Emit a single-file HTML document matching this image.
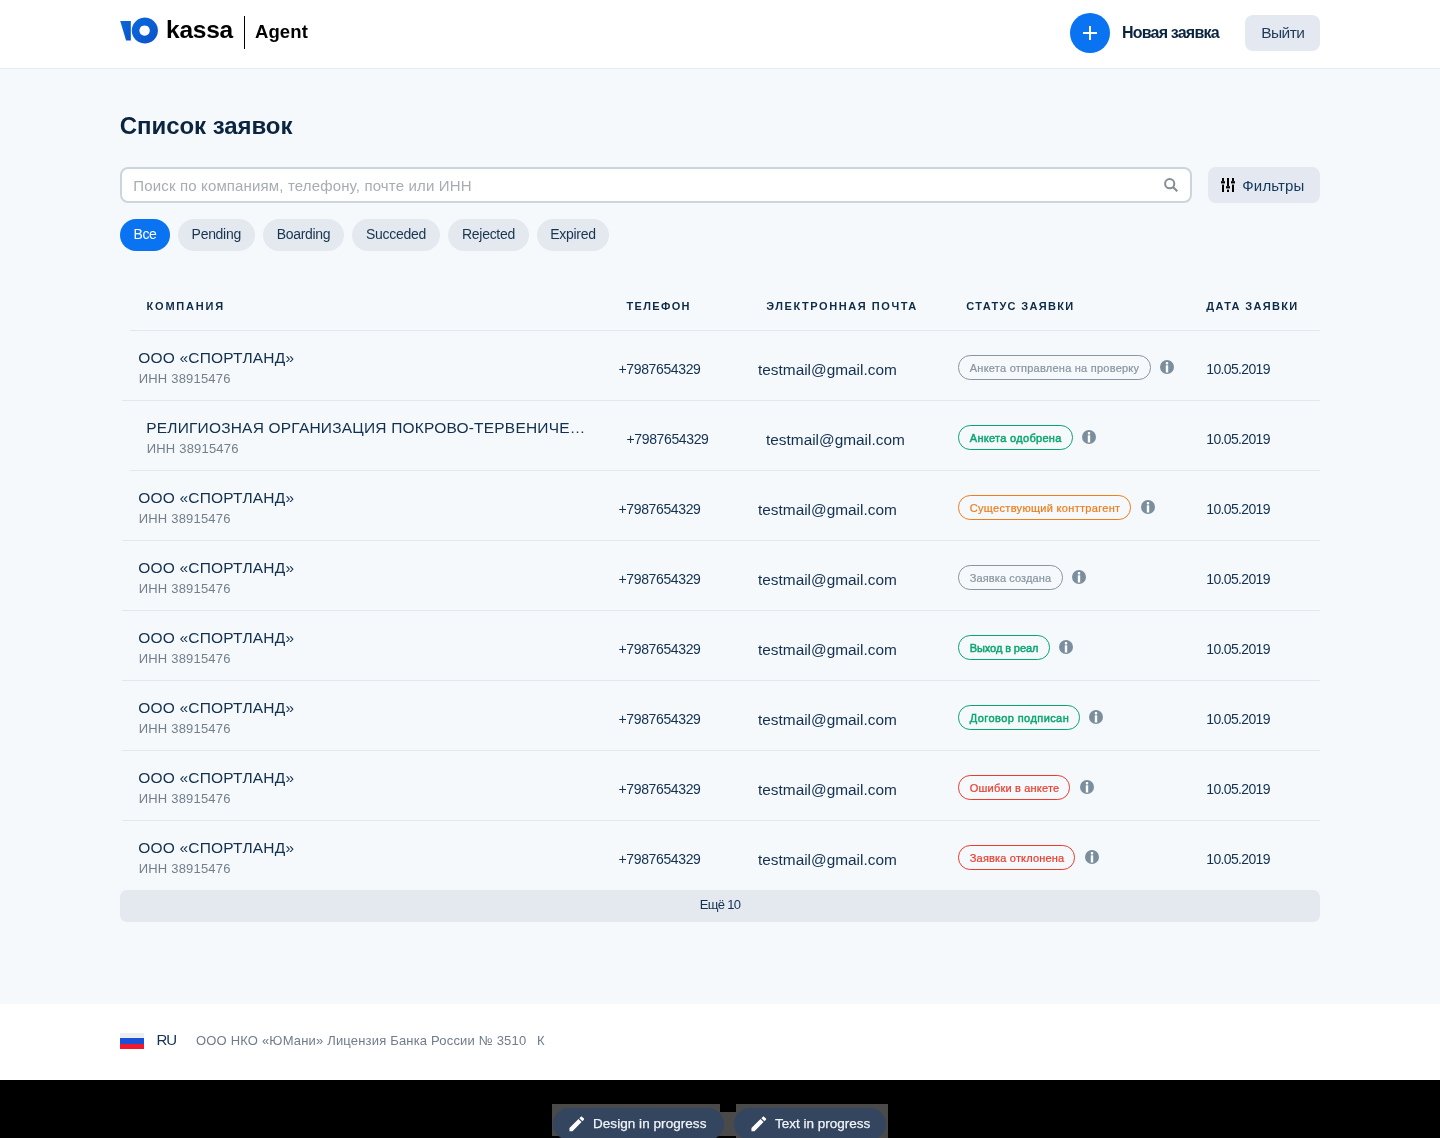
<!DOCTYPE html><html lang="ru"><head><meta charset="utf-8"><title>Список заявок</title><style>
*{box-sizing:border-box;margin:0;padding:0}
html,body{width:1440px;height:1138px;overflow:hidden}
body{font-family:"Liberation Sans",sans-serif;background:#f5f9fc;position:relative;color:#12304f}
#wrap{position:absolute;left:0;top:0;width:1440px;height:1138px;will-change:transform;overflow:hidden}
.abs{position:absolute;white-space:nowrap}
.t{position:absolute;white-space:nowrap;line-height:1}
#hdr{position:absolute;left:0;top:0;width:1440px;height:68px;background:#fff;border-bottom:1px solid #e6ebf1;height:69px}
#ftr{position:absolute;left:0;top:1004px;width:1440px;height:76px;background:#fff}
#blk{position:absolute;left:0;top:1080px;width:1440px;height:58px;background:#000}
.chip{position:absolute;top:219px;height:32px;border-radius:16px;background:#e4e9f0;color:#173450;font-size:14px;letter-spacing:-.3px;line-height:31px;text-align:center}
.chip.on{background:#0a73f2;color:#fff}
.th{position:absolute;top:301px;font-size:11px;font-weight:700;line-height:11px;color:#0e2b47;white-space:nowrap}
.row{position:absolute;left:0;width:1440px;height:70px}
.row .line{position:absolute;bottom:-1px;height:1px;background:#e3e8ee;right:120px}
.name{position:absolute;top:19.7px;font-size:15.5px;letter-spacing:.2px;line-height:16px;color:#12304f;white-space:nowrap}
.inn{position:absolute;top:41.6px;font-size:13px;letter-spacing:.2px;line-height:13px;color:#737f8b;white-space:nowrap}
.ph{position:absolute;top:31.8px;font-size:14px;letter-spacing:-.37px;line-height:14px;white-space:nowrap}
.em{position:absolute;top:32.3px;font-size:15.4px;line-height:16px;white-space:nowrap}
.dt{position:absolute;left:1206.3px;top:31.9px;font-size:14px;letter-spacing:-.66px;line-height:14px;white-space:nowrap}
.pill{position:absolute;left:958px;top:25.2px;height:24.4px;border-radius:12.2px;border:1.6px solid;font-size:11px;line-height:24.6px;padding-left:10.8px;white-space:nowrap;-webkit-text-stroke:.22px}
.gray{color:#8995a1;border-color:#8995a1}
.green{color:#0aa56d;border-color:#0aa56d;-webkit-text-stroke:.45px #0aa56d}
.orange{color:#f07c1a;border-color:#f07c1a}
.red{color:#ec3b2d;border-color:#ec3b2d}
.info{position:absolute;top:30.3px;width:14px;height:14px}
</style></head><body><div id="wrap">
<div id="hdr"></div>
<svg class="abs" style="left:120px;top:17px" width="39" height="27" viewBox="0 0 39 27">
<defs><linearGradient id="lg" x1="0" y1="0" x2="1" y2="1"><stop offset="0" stop-color="#0a6ade"/><stop offset="1" stop-color="#0a52c8"/></linearGradient></defs>
<path d="M0.2 4.1 L10.8 4.1 L10.8 23.6 L6.1 23.6 Z" fill="url(#lg)"/>
<path fill-rule="evenodd" d="M24.85 0.4 a13.1 13.1 0 1 0 0.001 0 Z M24.6 8.4 a5.2 5.2 0 1 1 -0.001 0 Z" fill="url(#lg)"/>
</svg>
<div class="t" style="left:166.1px;top:18.4px;font-size:24.5px;font-weight:700;color:#000;letter-spacing:-.25px">kassa</div>
<div class="abs" style="left:244px;top:16px;width:1px;height:33px;background:#000"></div>
<div class="t" style="left:255px;top:22.6px;font-size:18.5px;font-weight:700;color:#000;letter-spacing:.1px">Agent</div>
<div class="abs" style="left:1070px;top:13px;width:40px;height:40px;border-radius:20px;background:#0a73f2"></div>
<div class="abs" style="left:1083px;top:32px;width:14px;height:2px;background:#fff"></div><div class="abs" style="left:1089px;top:26px;width:2px;height:14px;background:#fff"></div>
<div class="t" style="left:1122px;top:24.9px;font-size:16px;font-weight:700;letter-spacing:-.8px;color:#0b2540">Новая заявка</div>
<div class="abs" style="left:1245px;top:15px;width:75px;height:36px;border-radius:8px;background:#e4e9f1;text-align:center;font-size:15.5px;letter-spacing:-.6px;line-height:36px;color:#1f3a57;padding-left:.6px">Выйти</div>
<div class="t" style="left:119.8px;top:113.7px;font-size:24px;font-weight:700;color:#0b2540;letter-spacing:-.06px">Список заявок</div>
<div class="abs" style="left:120px;top:167px;width:1072px;height:36px;border:2px solid #cdd4db;border-radius:8px;background:#fff"></div>
<div class="t" style="left:133.3px;top:177.9px;font-size:15px;letter-spacing:.15px;color:#a8adb3">Поиск по компаниям, телефону, почте или ИНН</div>
<svg class="abs" style="left:1162px;top:176px" width="18" height="18" viewBox="0 0 18 18"><circle cx="7.7" cy="7.7" r="4.6" fill="none" stroke="#858d96" stroke-width="2"/><path d="M11.2 11.2 L15.3 15.3" stroke="#858d96" stroke-width="2.2"/></svg>
<div class="abs" style="left:1208px;top:167px;width:112px;height:36px;border-radius:8px;background:#e4e9f1"></div>
<svg class="abs" style="left:1220px;top:177px" width="16" height="16" viewBox="0 0 16 16" fill="#000">
<rect x="2" y="1" width="2" height="3.2"/><rect x="1" y="4.2" width="4" height="2.2"/><rect x="2" y="7.6" width="2" height="7.4"/>
<rect x="7" y="1" width="2" height="8.2"/><rect x="6" y="9.2" width="4" height="2.2"/><rect x="7" y="12.6" width="2" height="2.4"/>
<rect x="12" y="1" width="2" height="3.2"/><rect x="11" y="4.2" width="4" height="2.2"/><rect x="12" y="7.6" width="2" height="7.4"/>
</svg>
<div class="t" style="left:1242.3px;top:177.6px;font-size:15px;letter-spacing:.15px;color:#12385c">Фильтры</div>
<div class="chip on" style="left:120px;width:50px">Все</div>
<div class="chip" style="left:178px;width:76.5px">Pending</div>
<div class="chip" style="left:263px;width:81px">Boarding</div>
<div class="chip" style="left:352px;width:88px">Succeded</div>
<div class="chip" style="left:448px;width:81px">Rejected</div>
<div class="chip" style="left:537px;width:72px">Expired</div>
<div class="th" style="left:146.5px;letter-spacing:1.81px">КОМПАНИЯ</div>
<div class="th" style="left:626.5px;letter-spacing:1.33px">ТЕЛЕФОН</div>
<div class="th" style="left:766.3px;letter-spacing:1.57px">ЭЛЕКТРОННАЯ ПОЧТА</div>
<div class="th" style="left:966.3px;letter-spacing:1.33px">СТАТУС ЗАЯВКИ</div>
<div class="th" style="left:1206.3px;letter-spacing:1.34px">ДАТА ЗАЯВКИ</div>
<div class="abs" style="left:130px;top:330px;width:1190px;height:1px;background:#e3e8ee"></div>
<div class="row" style="top:330px">
<div class="line" style="left:122px"></div>
<div class="name" style="left:138.2px">ООО «СПОРТЛАНД»</div>
<div class="inn" style="left:138.7px">ИНН 38915476</div>
<div class="ph" style="left:618.5px">+7987654329</div>
<div class="em" style="left:758px">testmail@gmail.com</div>
<div class="pill gray" style="width:193px;letter-spacing:0.24px">Анкета отправлена на проверку</div>
<svg class="info" style="left:1160.2px" viewBox="0 0 14 14"><circle cx="7" cy="7" r="7" fill="#7b8e9e"/><rect x="5.8" y="5.3" width="2.4" height="7.2" fill="#fff"/><rect x="5.8" y="2" width="2.4" height="2.5" rx=".7" fill="#fff"/></svg>
<div class="dt">10.05.2019</div>
</div>
<div class="row" style="top:400px">
<div class="line" style="left:130px"></div>
<div class="name" style="left:146.2px">РЕЛИГИОЗНАЯ ОРГАНИЗАЦИЯ ПОКРОВО-ТЕРВЕНИЧЕ…</div>
<div class="inn" style="left:146.7px">ИНН 38915476</div>
<div class="ph" style="left:626.5px">+7987654329</div>
<div class="em" style="left:766px">testmail@gmail.com</div>
<div class="pill green" style="width:114.7px;letter-spacing:0.3px">Анкета одобрена</div>
<svg class="info" style="left:1081.9px" viewBox="0 0 14 14"><circle cx="7" cy="7" r="7" fill="#7b8e9e"/><rect x="5.8" y="5.3" width="2.4" height="7.2" fill="#fff"/><rect x="5.8" y="2" width="2.4" height="2.5" rx=".7" fill="#fff"/></svg>
<div class="dt">10.05.2019</div>
</div>
<div class="row" style="top:470px">
<div class="line" style="left:122px"></div>
<div class="name" style="left:138.2px">ООО «СПОРТЛАНД»</div>
<div class="inn" style="left:138.7px">ИНН 38915476</div>
<div class="ph" style="left:618.5px">+7987654329</div>
<div class="em" style="left:758px">testmail@gmail.com</div>
<div class="pill orange" style="width:173.3px;letter-spacing:0.31px">Существующий конттрагент</div>
<svg class="info" style="left:1140.5px" viewBox="0 0 14 14"><circle cx="7" cy="7" r="7" fill="#7b8e9e"/><rect x="5.8" y="5.3" width="2.4" height="7.2" fill="#fff"/><rect x="5.8" y="2" width="2.4" height="2.5" rx=".7" fill="#fff"/></svg>
<div class="dt">10.05.2019</div>
</div>
<div class="row" style="top:540px">
<div class="line" style="left:122px"></div>
<div class="name" style="left:138.2px">ООО «СПОРТЛАНД»</div>
<div class="inn" style="left:138.7px">ИНН 38915476</div>
<div class="ph" style="left:618.5px">+7987654329</div>
<div class="em" style="left:758px">testmail@gmail.com</div>
<div class="pill gray" style="width:104.7px;letter-spacing:0.1px">Заявка создана</div>
<svg class="info" style="left:1071.9px" viewBox="0 0 14 14"><circle cx="7" cy="7" r="7" fill="#7b8e9e"/><rect x="5.8" y="5.3" width="2.4" height="7.2" fill="#fff"/><rect x="5.8" y="2" width="2.4" height="2.5" rx=".7" fill="#fff"/></svg>
<div class="dt">10.05.2019</div>
</div>
<div class="row" style="top:610px">
<div class="line" style="left:122px"></div>
<div class="name" style="left:138.2px">ООО «СПОРТЛАНД»</div>
<div class="inn" style="left:138.7px">ИНН 38915476</div>
<div class="ph" style="left:618.5px">+7987654329</div>
<div class="em" style="left:758px">testmail@gmail.com</div>
<div class="pill green" style="width:91.7px;letter-spacing:-0.1px">Выход в реал</div>
<svg class="info" style="left:1058.9px" viewBox="0 0 14 14"><circle cx="7" cy="7" r="7" fill="#7b8e9e"/><rect x="5.8" y="5.3" width="2.4" height="7.2" fill="#fff"/><rect x="5.8" y="2" width="2.4" height="2.5" rx=".7" fill="#fff"/></svg>
<div class="dt">10.05.2019</div>
</div>
<div class="row" style="top:680px">
<div class="line" style="left:122px"></div>
<div class="name" style="left:138.2px">ООО «СПОРТЛАНД»</div>
<div class="inn" style="left:138.7px">ИНН 38915476</div>
<div class="ph" style="left:618.5px">+7987654329</div>
<div class="em" style="left:758px">testmail@gmail.com</div>
<div class="pill green" style="width:121.9px;letter-spacing:0.42px">Договор подписан</div>
<svg class="info" style="left:1089.1px" viewBox="0 0 14 14"><circle cx="7" cy="7" r="7" fill="#7b8e9e"/><rect x="5.8" y="5.3" width="2.4" height="7.2" fill="#fff"/><rect x="5.8" y="2" width="2.4" height="2.5" rx=".7" fill="#fff"/></svg>
<div class="dt">10.05.2019</div>
</div>
<div class="row" style="top:750px">
<div class="line" style="left:122px"></div>
<div class="name" style="left:138.2px">ООО «СПОРТЛАНД»</div>
<div class="inn" style="left:138.7px">ИНН 38915476</div>
<div class="ph" style="left:618.5px">+7987654329</div>
<div class="em" style="left:758px">testmail@gmail.com</div>
<div class="pill red" style="width:112.3px;letter-spacing:0.19px">Ошибки в анкете</div>
<svg class="info" style="left:1079.5px" viewBox="0 0 14 14"><circle cx="7" cy="7" r="7" fill="#7b8e9e"/><rect x="5.8" y="5.3" width="2.4" height="7.2" fill="#fff"/><rect x="5.8" y="2" width="2.4" height="2.5" rx=".7" fill="#fff"/></svg>
<div class="dt">10.05.2019</div>
</div>
<div class="row" style="top:820px">
<div class="name" style="left:138.2px">ООО «СПОРТЛАНД»</div>
<div class="inn" style="left:138.7px">ИНН 38915476</div>
<div class="ph" style="left:618.5px">+7987654329</div>
<div class="em" style="left:758px">testmail@gmail.com</div>
<div class="pill red" style="width:117.4px;letter-spacing:0.18px">Заявка отклонена</div>
<svg class="info" style="left:1084.6px" viewBox="0 0 14 14"><circle cx="7" cy="7" r="7" fill="#7b8e9e"/><rect x="5.8" y="5.3" width="2.4" height="7.2" fill="#fff"/><rect x="5.8" y="2" width="2.4" height="2.5" rx=".7" fill="#fff"/></svg>
<div class="dt">10.05.2019</div>
</div>
<div class="abs" style="left:120px;top:890px;width:1200px;height:32px;border-radius:7px;background:#e4e9f0;text-align:center;font-size:13px;letter-spacing:-.68px;line-height:30.6px;color:#12304f">Ещё 10</div>
<div id="ftr"></div>
<div class="abs" style="left:120px;top:1033px;width:24px;height:16px;background:linear-gradient(#eceff2 0 33.3%,#1b50d8 33.3% 66.6%,#f01a2e 66.6%)"></div>
<div class="t" style="left:156.5px;top:1032px;font-size:15px;letter-spacing:-1px;color:#12304f">RU</div>
<div class="t" style="left:196px;top:1034px;font-size:13px;letter-spacing:.18px;color:#6f7c8a">ООО НКО «ЮМани» Лицензия Банка России № 3510</div>
<div class="t" style="left:537px;top:1034px;font-size:13px;color:#6f7c8a">К</div>
<div id="blk"></div>
<div class="abs" style="left:552px;top:1104px;width:168px;height:32px;background:#4a4a4a"></div>
<div class="abs" style="left:720px;top:1112px;width:16px;height:24px;background:#4a4a4a"></div>
<div class="abs" style="left:736px;top:1104px;width:152px;height:34px;background:#4a4a4a"></div>
<div class="abs" style="left:553px;top:1108px;width:171px;height:32px;border-radius:16px;background:#33455f"></div>
<svg class="abs" style="left:566.9px;top:1114.3px" width="19.6" height="19.6" viewBox="0 0 24 24"><path d="M3 17.25V21h3.75L17.81 9.94l-3.75-3.75L3 17.25zM20.71 7.04c.39-.39.39-1.02 0-1.41l-2.34-2.34c-.39-.39-1.02-.39-1.41 0l-1.83 1.83 3.75 3.75 1.83-1.83z" fill="#fff"/></svg>
<div class="t" style="left:593px;top:1116.8px;font-size:13.5px;letter-spacing:.05px;-webkit-text-stroke:.25px #f2f5f9;color:#f2f5f9">Design in progress</div>
<div class="abs" style="left:734px;top:1108px;width:152px;height:32px;border-radius:16px;background:#33455f"></div>
<svg class="abs" style="left:748.9px;top:1114.3px" width="19.6" height="19.6" viewBox="0 0 24 24"><path d="M3 17.25V21h3.75L17.81 9.94l-3.75-3.75L3 17.25zM20.71 7.04c.39-.39.39-1.02 0-1.41l-2.34-2.34c-.39-.39-1.02-.39-1.41 0l-1.83 1.83 3.75 3.75 1.83-1.83z" fill="#fff"/></svg>
<div class="t" style="left:775px;top:1116.8px;font-size:13.5px;-webkit-text-stroke:.25px #f2f5f9;color:#f2f5f9">Text in progress</div>
</div></body></html>
